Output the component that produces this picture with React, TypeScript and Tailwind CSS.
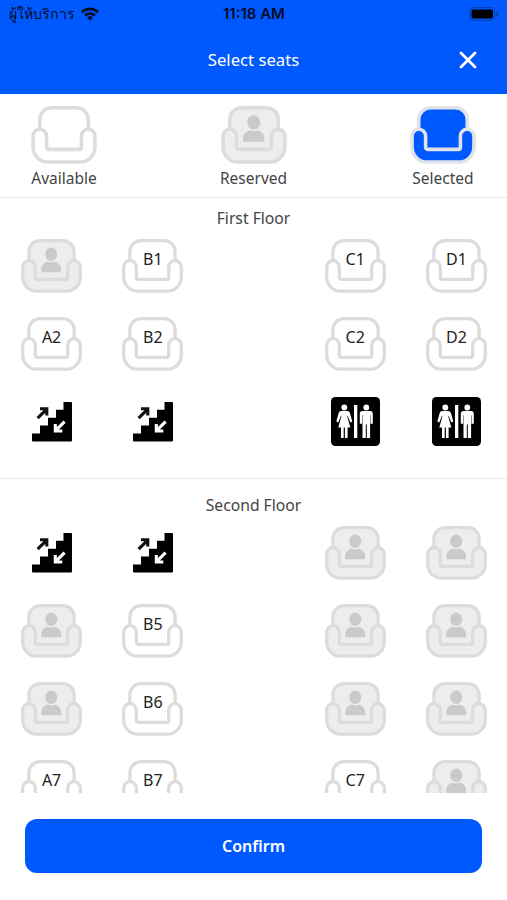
import clsx from "clsx";

type SeatStatus = "available" | "reserved" | "selected";

type Cell =
  | { kind: "seat"; label: string; status: SeatStatus }
  | { kind: "stairs" }
  | { kind: "toilet" }
  | null;

const free = (label: string): Cell => ({ kind: "seat", label, status: "available" });
const taken = (label: string): Cell => ({ kind: "seat", label, status: "reserved" });
const stairs: Cell = { kind: "stairs" };
const toilet: Cell = { kind: "toilet" };

const firstFloor: Cell[][] = [
  [taken("A1"), free("B1"), null, free("C1"), free("D1")],
  [free("A2"), free("B2"), null, free("C2"), free("D2")],
  [stairs, stairs, null, toilet, toilet],
];

const secondFloor: Cell[][] = [
  [stairs, stairs, null, taken("C4"), taken("D4")],
  [taken("A5"), free("B5"), null, taken("C5"), taken("D5")],
  [taken("A6"), free("B6"), null, taken("C6"), taken("D6")],
  [free("A7"), free("B7"), null, free("C7"), taken("D7")],
];

const seatFill = {
  available: "fill-white",
  reserved: "fill-[#ededed]",
  selected: "fill-[#0059ff]",
};

function SeatIcon({ status, className }: { status: SeatStatus; className?: string }) {
  return (
    <svg
      viewBox="0 0 61 54"
      className={clsx("block", seatFill[status], className)}
      stroke={status === "selected" ? "#dfe2e8" : "#dcdcdc"}
      strokeWidth="3.3"
      strokeLinejoin="round"
    >
      <path d="M7.9 24V12.700a11 11 0 0 1 11-11h23.200a11 11 0 0 1 11 11V24L47 41H14z" stroke="none" />
      <path d="M7.900 21.600v-8.900a11 11 0 0 1 11-11h23.200a11 11 0 0 1 11 11v8.900" fill="none" />
      <path d="M1.700 28a6.300 6.300 0 0 1 12.600 0v10.400a2 2 0 0 0 2 2h28.400a2 2 0 0 0 2-2V28a6.300 6.300 0 0 1 12.600 0v10.200a14 14 0 0 1-14 14h-29.600a14 14 0 0 1-14-14z" />
      {status === "reserved" && (
        <g fill="#cacaca" stroke="none">
          <ellipse cx="30.2" cy="15.3" rx="6" ry="6.7" />
          <path d="M20.3 33.3v-3.2c0-4 3-6.400 6.200-7.600 2.200 1.200 5.200 1.200 7.400 0 3.200 1.200 6.200 3.600 6.200 7.600v3.200z" />
        </g>
      )}
    </svg>
  );
}

function StairsIcon() {
  return (
    <svg viewBox="0 0 40 40" className="mt-[7.500px] size-10">
      <path d="M0 31.500H8V23.500H16V15.700H24V7.800H31.500V0H39Q40 0 40 1V38.600Q40 39.600 39 39.600H1Q0 39.600 0 38.600Z" />
      <path d="M5.600 16.200L14 7.800M8 6.800H14.800V13.600" fill="none" stroke="#111" strokeWidth="3.1" />
      <path d="M32.600 19.600L24 28.200M23.300 22V29H30.300" fill="none" stroke="#fff" strokeWidth="3.1" />
    </svg>
  );
}

function ToiletIcon() {
  return (
    <svg viewBox="0 0 49 49" className="mt-[2.500px] size-[49px]">
      <rect width="49" height="49" rx="4.5" />
      <g fill="#fff">
        <circle cx="13.3" cy="10.5" r="2.9" />
        <path d="M10.300 14h6c1.500 0 2.200.8 2.600 2l2.400 8.600-2 1-2.700-7.200-.3 1 3 11h-2.700v10.700h-2.700V30.400h-1.200v10.700H10V30.400H7.300l3-11-.3-1-2.700 7.200-2-1L7.700 16c.4-1.200 1.100-2 2.600-2z" />
        <rect x="23" y="8" width="3.3" height="33" />
        <circle cx="35.3" cy="10.5" r="2.9" />
        <path d="M31.500 14h7.600c1.700 0 2.700 1 2.700 2.700v10h-2.300v-8.500h-.4v22.900h-3.300V27.500h-1v13.600h-3.300V18.200h-.4v8.500h-2.300v-10c0-1.700 1-2.700 2.700-2.700z" />
      </g>
    </svg>
  );
}

function SeatCell({ cell }: { cell: Cell }) {
  if (!cell) return <div />;
  if (cell.kind === "stairs") return <StairsIcon />;
  if (cell.kind === "toilet") return <ToiletIcon />;
  return (
    <button className="relative" aria-label={cell.label}>
      <SeatIcon status={cell.status} className="h-[54px] w-[61px]" />
      {cell.status === "available" && (
        <span className="absolute inset-x-0 top-2 text-center text-[16px] leading-6 text-[#222]">
          {cell.label}
        </span>
      )}
    </button>
  );
}

function Floor({ title, rows, className }: { title: string; rows: Cell[][]; className?: string }) {
  return (
    <section className={className}>
      <h2 className="text-center text-[15.700px] leading-6 text-[#444]">{title}</h2>
      <div className="mt-[8.600px] pl-px">
        {rows.map((row, i) => (
          <div key={i} className="grid h-[78.200px] grid-cols-5 items-start justify-items-center">
            {row.map((cell, j) => (
              <SeatCell key={j} cell={cell} />
            ))}
          </div>
        ))}
      </div>
    </section>
  );
}

function StatusBar() {
  return (
    <div className="grid h-7 grid-cols-3 items-center pr-2 pl-[9px] text-[#020b26]">
      <div className="flex items-center gap-1.5">
        <span className="text-[14.200px] leading-5 font-medium whitespace-nowrap">ผู้ให้บริการ</span>
        <svg viewBox="0 0 18 14" className="h-[14px] w-[18px]" fill="none" stroke="currentColor" strokeWidth="2.7">
          <path d="M1 5.200a11.500 11.500 0 0 1 16 0M4 8.500a7.200 7.200 0 0 1 10 0" />
          <path d="M9 13.600L6 10.600a4.300 4.300 0 0 1 6 0z" fill="currentColor" stroke="none" />
        </svg>
      </div>
      <span className="text-center font-['Inter'] text-[15px] leading-5 font-semibold">11:18 AM</span>
      <svg viewBox="0 0 30 14" className="mb-px h-[14px] w-[30px] justify-self-end">
        <rect x=".7" y=".7" width="25" height="12.6" rx="4" fill="none" stroke="#0440b8" strokeWidth="1.2" />
        <rect x="2.5" y="2.5" width="21.5" height="9" rx="2" fill="#000" />
        <path d="M27 4.500a2.500 2.500 0 0 1 0 5z" fill="#0440b8" />
      </svg>
    </div>
  );
}

const legend: { label: string; status: SeatStatus }[] = [
  { label: "Available", status: "available" },
  { label: "Reserved", status: "reserved" },
  { label: "Selected", status: "selected" },
];

export default function App() {
  return (
    <div className="flex h-[900px] w-[507px] flex-col overflow-hidden bg-white font-['Noto_Sans',sans-serif]">
      <header className="h-[94px] shrink-0 bg-[#0059ff]">
        <StatusBar />
        <div className="grid h-16 grid-cols-[1fr_auto_1fr] items-center px-[30px] text-white">
          <span />
          <h1 className="text-[16.700px] leading-6">Select seats</h1>
          <button aria-label="Close" className="justify-self-end">
            <svg viewBox="0 0 18 18" className="block size-[18px]" stroke="currentColor" strokeWidth="2.8" strokeLinecap="round">
              <path d="M2 2l14 14M16 2L2 16" />
            </svg>
          </button>
        </div>
      </header>

      <div className="flex h-[104px] shrink-0 justify-between border-b border-[#e8e8e8] px-[31px] pt-3">
        {legend.map((item) => (
          <div key={item.status} className="flex w-[66px] flex-col items-center">
            <SeatIcon status={item.status} className="h-[58px] w-[66px] shrink-0" />
            <span className="mt-0.5 text-[15.500px] leading-6 text-[#444]">{item.label}</span>
          </div>
        ))}
      </div>

      <main className="h-[595px] shrink-0 overflow-hidden">
        <Floor title="First Floor" rows={firstFloor} className="h-[281px] border-b border-[#e8e8e8] pt-2" />
        <Floor title="Second Floor" rows={secondFloor} className="pt-[14px]" />
      </main>

      <footer className="px-[25px] pt-[26px]">
        <button className="h-[54px] w-full rounded-xl bg-[#0059ff] text-[16px] font-semibold text-white">
          Confirm
        </button>
      </footer>
    </div>
  );
}
